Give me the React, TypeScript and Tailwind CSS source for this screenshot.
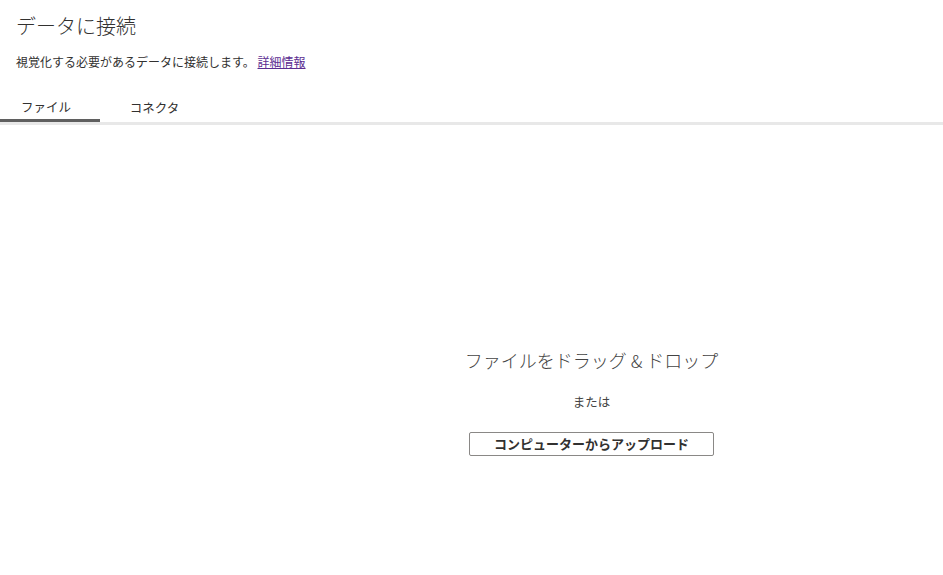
export default function App() {
  const font = { fontFamily: '"Noto Sans CJK JP", "Noto Sans", sans-serif' };
  return (
    <div
      className="w-[943px] h-[575px] bg-white text-[#323130] flex flex-col overflow-hidden"
      style={font}
    >
      {/* Header */}
      <div className="px-4 pt-[12px]">
        <h1 className="text-[20px] leading-[28px] font-light text-[#323130]">
          データに接続
        </h1>
        <p className="mt-[14px] text-[12px] leading-[16px] text-[#323130]">
          視覚化する必要があるデータに接続します。{" "}
          <a href="#" className="text-[#5c2d91] underline">
            詳細情報
          </a>
        </p>
      </div>

      {/* Tabs */}
      <div className="mt-[28px] flex border-b-[3px] border-[#e8e8e8]">
        <button className="w-[100px] h-[24px] pb-[4px] text-[12.5px] leading-[18px] -mb-[3px] border-b-[3px] border-[#5f5f5f] text-[#323130]">
          <span className="block pr-[8px]">ファイル</span>
        </button>
        <button className="w-[109px] h-[24px] pb-[4px] text-[12.5px] leading-[18px] text-[#323130]">
          コネクタ
        </button>
      </div>

      {/* Drop area */}
      <div className="flex-1 pl-[240px] flex flex-col items-center pt-[222px]">
        <div className="text-[18px] leading-[26px] font-light text-[#444]">
          ファイルをドラッグ &amp; ドロップ
        </div>
        <div className="mt-[20px] text-[12.5px] leading-[18px] text-[#444]">
          または
        </div>
        <button className="mt-[21px] w-[245px] h-[24px] border border-[#8a8886] rounded-[2px] text-[13px] font-bold text-[#323130] leading-[20px]">
          コンピューターからアップロード
        </button>
      </div>
    </div>
  );
}
